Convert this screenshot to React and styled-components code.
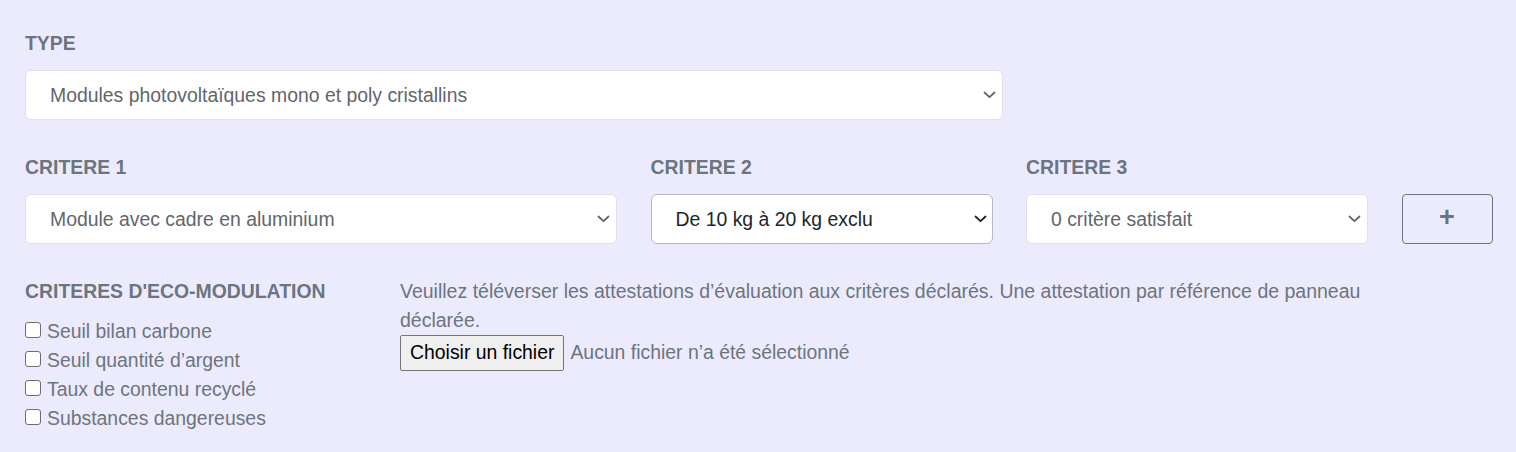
import React from "react";
import styled, { createGlobalStyle } from "styled-components";

const GlobalStyle = createGlobalStyle`
  html, body {
    margin: 0;
    padding: 0;
    background: #ebebfd;
  }
  body {
    font-family: "Liberation Sans", Arial, sans-serif;
    font-size: 19.2px;
    line-height: 1.5;
    color: #6c757d;
  }
  * { box-sizing: border-box; }
`;

const Page = styled.div`
  padding: 29px 25px 20px 25px;
  min-height: 452px;
  display: flex;
  flex-direction: column;
  gap: 33px;
`;

const Field = styled.div`
  display: flex;
  flex-direction: column;
  gap: 12px;
`;

const Label = styled.div`
  font-weight: 700;
  font-size: 19.4px;
  line-height: 28.8px;
  color: #6c757d;
  text-transform: uppercase;
`;

const SelectWrap = styled.div`
  position: relative;
  width: ${(p) => p.width || "100%"};
`;

const Select = styled.select`
  appearance: none;
  -webkit-appearance: none;
  width: 100%;
  height: 50px;
  padding: 0 40px 0 24px;
  font-family: inherit;
  font-size: 19.4px;
  color: ${(p) => (p.$active ? "#212529" : "#5f666d")};
  background: #fff;
  border: 1px solid ${(p) => (p.$active ? "#b4b8c2" : "#dee2e6")};
  border-radius: 6px;
  outline: none;
`;

const Chevron = styled.svg`
  position: absolute;
  right: ${(p) => (p.$active ? "6px" : "7px")};
  top: 50%;
  transform: translateY(-50%);
  pointer-events: none;
`;

const CriteriaRow = styled.div`
  display: grid;
  grid-template-columns: 592px 342px 342px 91px;
  column-gap: 33.5px;
  align-items: end;
`;

const PlusButton = styled.button`
  height: 50px;
  width: 91px;
  background: transparent;
  border: 1px solid #6c757d;
  border-radius: 4px;
  color: #6c757d;
  font-family: inherit;
  font-size: 27px;
  font-weight: 700;
  line-height: 1;
  display: flex;
  align-items: center;
  justify-content: center;
  padding: 0 0 3px 0;
`;

const BottomRow = styled.div`
  display: grid;
  grid-template-columns: 375px 1000px;
  align-items: start;
`;

const CheckList = styled.div`
  display: flex;
  flex-direction: column;
  margin-top: 12px;
`;

const CheckItem = styled.label`
  display: flex;
  align-items: center;
  gap: 6px;
  height: 29px;
  font-size: 19.4px;
  color: #6c757d;
`;

const Box = styled.span`
  width: 16px;
  height: 16px;
  border: 1.5px solid #6e6e6e;
  border-radius: 3px;
  background: #fff;
  flex: none;
  margin-top: -3px;
`;

const Help = styled.p`
  margin: 0;
  font-size: 19.5px;
  line-height: 29px;
  color: #6c757d;
`;

const FileLine = styled.div`
  display: flex;
  align-items: center;
  gap: 6px;
  font-size: 19.4px;
`;

const FileButton = styled.span`
  display: inline-flex;
  align-items: center;
  height: 36px;
  padding: 0 9px;
  background: #efefef;
  border: 1px solid #767676;
  border-radius: 2px;
  color: #000;
`;

const FileName = styled.span`
  color: #6c757d;
`;

function DropDown({ value, width, active }) {
  return (
    <SelectWrap width={width}>
      <Select $active={active} defaultValue={value}>
        <option>{value}</option>
      </Select>
      <Chevron $active={active} width="13" height="8" viewBox="0 0 13 8">
        <polyline
          points="1.5,1.5 6.5,6.2 11.5,1.5"
          fill="none"
          stroke={active ? "#222" : "#5f666d"}
          strokeWidth="1.8"
          strokeLinecap="round"
          strokeLinejoin="round"
        />
      </Chevron>
    </SelectWrap>
  );
}

const checks = [
  "Seuil bilan carbone",
  "Seuil quantité d’argent",
  "Taux de contenu recyclé",
  "Substances dangereuses",
];

export default function App() {
  return (
    <>
      <GlobalStyle />
      <Page>
        <Field>
          <Label>Type</Label>
          <DropDown width="978px" value="Modules photovoltaïques mono et poly cristallins" />
        </Field>
        <CriteriaRow>
          <Field>
            <Label>Critere 1</Label>
            <DropDown value="Module avec cadre en aluminium" />
          </Field>
          <Field>
            <Label>Critere 2</Label>
            <DropDown active value="De 10 kg à 20 kg exclu" />
          </Field>
          <Field>
            <Label>Critere 3</Label>
            <DropDown value="0 critère satisfait" />
          </Field>
          <PlusButton type="button">+</PlusButton>
        </CriteriaRow>
        <BottomRow>
          <div>
            <Label>Criteres d'eco-modulation</Label>
            <CheckList>
              {checks.map((c) => (
                <CheckItem key={c}>
                  <Box />
                  {c}
                </CheckItem>
              ))}
            </CheckList>
          </div>
          <div>
            <Help>
              Veuillez téléverser les attestations d’évaluation aux critères déclarés. Une attestation par référence de panneau déclarée.
            </Help>
            <FileLine>
              <FileButton>Choisir un fichier</FileButton>
              <FileName>Aucun fichier n’a été sélectionné</FileName>
            </FileLine>
          </div>
        </BottomRow>
      </Page>
    </>
  );
}
